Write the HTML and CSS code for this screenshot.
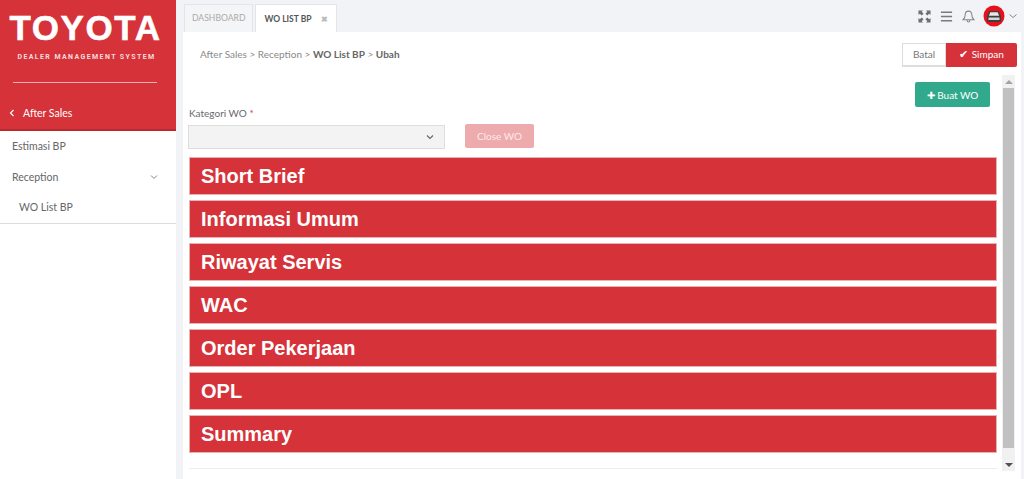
FILE: index.html
```html
<!DOCTYPE html>
<html lang="en">
<head>
    <meta charset="UTF-8">
    <meta name="viewport" content="width=device-width, initial-scale=1.0">
    <title>WO List BP</title>
    <link rel="stylesheet" href="styles.css">
</head>
<body>
    <div class="app">
        <!-- Sidebar -->
        <aside class="sidebar">
            <div class="brand">
                <div class="brand-name">TOYOTA</div>
                <div class="brand-sub">DEALER MANAGEMENT SYSTEM</div>
                <div class="brand-line"></div>
            </div>
            <div class="menu-back">
                <svg class="back-icon" viewBox="0 0 6 8"><path d="M4.5 1 L1.5 4 L4.5 7" fill="none" stroke="#fff" stroke-width="1.2"/></svg>
                After Sales
            </div>
            <ul class="menu">
                <li>Estimasi BP</li>
                <li class="menu-parent">Reception
                    <svg class="menu-chevron" viewBox="0 0 8 6"><path d="M1 1.5 L4 4.5 L7 1.5" fill="none" stroke="#888" stroke-width="1"/></svg>
                </li>
                <li class="menu-child">WO List BP</li>
            </ul>
        </aside>

        <div class="main">
            <!-- Tabs -->
            <header class="topbar">
                <div class="tab">DASHBOARD</div>
                <div class="tab active">WO LIST BP <span class="tab-close">✖</span></div>
                <div class="top-icons">
                    <svg class="top-icon" viewBox="0 0 14 14"><path d="M.5 .5h5L4 2l2 2-2 2-2-2-1.500 1.500zM13.500 .5v5L12 4l-2 2-2-2 2-2L8.500 .5zM.5 13.500v-5L2 10l2-2 2 2-2 2 1.500 1.500zM13.500 13.500h-5L10 12l-2-2 2-2 2 2 1.500-1.500z" fill="#6e6e6e"/></svg>
                    <svg class="top-icon" viewBox="0 0 14 14"><path d="M1 2.500h12M1 7h12M1 11.500h12" stroke="#7a7a7a" stroke-width="1.700"/></svg>
                    <svg class="top-icon" viewBox="0 0 14 14"><path d="M7 1.200c-2.600 0-3.600 2-3.600 4.200 0 2.800-1 4-2.200 5.100h11.600c-1.200-1.100-2.200-2.300-2.200-5.100 0-2.200-1-4.200-3.600-4.200zM5.500 10.700c0 1.500.7 2.300 1.500 2.300s1.500-.8 1.500-2.300" fill="none" stroke="#858585" stroke-width="1.100"/></svg>
                    <div class="avatar">
                        <svg viewBox="0 0 22 22" width="22" height="22">
                            <circle cx="11" cy="11" r="10.500" fill="#e8101c"/>
                            <path d="M4 17V11.500l2.300-5.500h9.400l2.300 5.500V17z" fill="#3f3f3f"/>
                            <path d="M7.300 7.300h7.400l1.400 3.400H5.900z" fill="#e9e9e9"/>
                            <path d="M5.500 12.500h11v2.500h-11z" fill="#d6d6d6"/>
                        </svg>
                    </div>
                    <svg class="avatar-chevron" viewBox="0 0 8 6"><path d="M.5 1.500 L4 4.500 L7.500 1.500" fill="none" stroke="#888" stroke-width="1"/></svg>
                </div>
            </header>

            <!-- Breadcrumb + actions -->
            <div class="page-head">
                <div class="crumbs">After Sales <i>&gt;</i> Reception <i>&gt;</i> <b>WO List BP</b> <i>&gt;</i> <b>Ubah</b></div>
                <div class="actions">
                    <button class="btn-cancel">Batal</button>
                    <button class="btn-save"><span class="check">✔</span> Simpan</button>
                </div>
            </div>

            <div class="page-body">
                <div class="content">
                    <div class="create-row">
                        <button class="btn-create"><span class="plus">✚</span> Buat WO</button>
                    </div>
                    <label class="field-label">Kategori WO <span class="req">*</span></label>
                    <div class="field-row">
                        <div class="select">
                            <svg class="select-chevron" viewBox="0 0 8 6"><path d="M1 1.500 L4 4.500 L7 1.500" fill="none" stroke="#666" stroke-width="1.100"/></svg>
                        </div>
                        <button class="btn-close-wo">Close WO</button>
                    </div>
                    <div class="panel">Short Brief</div>
                    <div class="panel">Informasi Umum</div>
                    <div class="panel">Riwayat Servis</div>
                    <div class="panel">WAC</div>
                    <div class="panel">Order Pekerjaan</div>
                    <div class="panel">OPL</div>
                    <div class="panel">Summary</div>
                    <div class="end-line"></div>
                </div>
                <div class="scrollbar">
                    <div class="scroll-btn"><span class="arrow-up"></span></div>
                    <div class="scroll-thumb"></div>
                    <div class="scroll-btn"><span class="arrow-down"></span></div>
                </div>
            </div>
        </div>
    </div>
</body>
</html>
```

FILE: styles.css
```css
* { margin: 0; padding: 0; box-sizing: border-box; }
html, body { height: 100%; overflow: hidden; }
body { font-family: Lato, Arial, sans-serif; font-size: 10px; background: #f2f3f6; color: #666; }
button { font-family: inherit; cursor: pointer; }

.app { display: flex; height: 479px; }

/* Sidebar */
.sidebar { width: 176px; flex: none; background: #fff; height: 100%; }
.brand { background: #d63239; height: 97px; padding-top: 9px; color: #fff; }
.brand-name { font-family: "Liberation Sans", Arial, sans-serif; font-weight: bold; font-size: 35px; line-height: 38px; letter-spacing: 1.6px; text-align: center; padding-right: 5px; -webkit-text-stroke: .5px #fff; }
.brand-sub { font-family: Roboto, Arial, sans-serif; font-weight: 700; font-size: 7px; letter-spacing: 1.4px; text-align: center; line-height: 10px; margin-top: 5px; padding-right: 3px; color: #f6dcdd; }
.brand-line { height: 1px; background: #e9b3b5; margin: 20px 19px 0 13px; }
.menu-back { background: #d63239; height: 34px; border-bottom: 2px solid #b92a30; color: #fff; font-size: 10.500px; display: flex; align-items: center; padding-left: 9px; gap: 8px; }
.back-icon { width: 6px; height: 8px; }
.menu { list-style: none; border-bottom: 1px solid #dcdcdc; height: 93px; }
.menu li { height: 30.500px; font-size: 10.500px; padding: 0 18px 0 12px; color: #666; display: flex; align-items: center; justify-content: space-between; }
.menu li.menu-child { padding-left: 19px; }
.menu-chevron { width: 8px; height: 6px; }

/* Top bar */
.main { flex: 1; min-width: 0; margin-left: 7px; display: flex; flex-direction: column; }
.topbar { height: 32px; display: flex; align-items: flex-end; flex: none; gap: 2px; padding-left: 1px; }
.tab { height: 28px; line-height: 26px; padding: 0 7px; font-size: 8.600px; color: #aaa; background: #f4f5f7; border: 1px solid #e4e5e8; border-bottom: none; }
.tab.active { background: #fff; color: #555; font-weight: bold; font-size: 8.500px; display: flex; align-items: center; gap: 9px; padding: 0 8px; }
.tab-close { color: #bbb; font-size: 8px; }
.top-icons { margin-left: auto; display: flex; align-items: center; gap: 9px; height: 32px; padding-right: 7px; }
.top-icon { width: 13px; height: 13px; }
.avatar { width: 22px; height: 22px; margin-left: -1px; }
.avatar-chevron { width: 8px; height: 6px; margin-left: -5px; }

/* Page head */
.page-head { display: flex; justify-content: space-between; flex: none; height: 43px; padding: 11px 4px 0 17px; background: #fff; margin-right: 3px; }
.crumbs { font-size: 10px; color: #8a8a8a; padding-top: 5px; }
.crumbs b { color: #666; font-weight: bold; }
.actions { display: flex; height: 24px; }
.btn-cancel { width: 44px; padding-bottom: 2px; background: #fff; border: 1px solid #ddd; border-bottom-width: 2px; color: #777; font-size: 10px; }
.btn-save { width: 71px; padding-bottom: 2px; background: #d63239; border: none; border-radius: 0 2px 2px 0; color: #fff; font-size: 10px; }
.check { font-size: 11px; margin-right: 1px; }

/* Body */
.page-body { flex: 1; min-height: 0; display: flex; background: #fff; margin-right: 3px; }
.content { width: 814px; padding: 7px 0 0 6px; flex: none; }
.create-row { display: flex; justify-content: flex-end; padding-right: 7px; height: 25px; }
.btn-create { width: 75px; height: 25px; background: #30a98c; border: none; border-radius: 2px; color: #fff; font-size: 10px; }
.plus { font-size: 10px; }
.field-label { display: block; margin-top: -1px; font-size: 10px; line-height: 14px; color: #6a6a6a; }
.req { color: #d63239; }
.field-row { display: flex; align-items: flex-start; gap: 20px; margin-top: 5px; height: 24px; }
.select { width: 257px; height: 24px; margin-left: -1px; background: #f3f3f3; border: 1px solid #dedede; display: flex; align-items: center; justify-content: flex-end; padding-right: 10px; }
.select-chevron { width: 8px; height: 6px; }
.btn-close-wo { width: 69px; height: 24px; margin-top: -1px; background: #eeabae; border: none; border-radius: 2px; color: #fbeaea; font-size: 10px; }
.panel { height: 38px; margin-top: 5px; background: #d63239; border: 1px solid #e6b4b6; color: #fff; font-family: "Liberation Sans", Arial, sans-serif; font-weight: bold; font-size: 20px; line-height: 36px; padding-left: 11px; }
.field-row + .panel { margin-top: 8px; }
.end-line { height: 1px; background: #eee; margin-top: 15px; }

/* Scrollbar */
.scrollbar { width: 13px; height: 396px; margin-left: 5px; background: #f1f1f1; display: flex; flex-direction: column; flex: none; }
.scroll-btn { height: 13px; flex: none; display: flex; align-items: center; justify-content: center; }
.scroll-thumb { height: 360px; flex: none; background: #c1c1c1; margin: 0 1px 10px; }
.arrow-up { border: 4px solid transparent; border-top: none; border-bottom: 4px solid #a3a3a3; }
.arrow-down { border: 4px solid transparent; border-bottom: none; border-top: 4px solid #505050; }
```
